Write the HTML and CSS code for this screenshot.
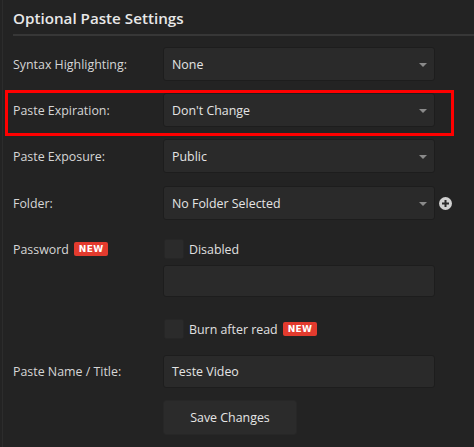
FILE: index.html
```html
<!DOCTYPE html>
<html>
<head>
<meta charset="utf-8">
<link rel="stylesheet" href="styles.css">
</head>
<body>
<div class="panel">
  <h2 class="title">Optional Paste Settings</h2>
  <div class="form">
    <div class="row r-syntax">
      <label class="label">Syntax Highlighting:</label>
      <div class="select"><span>None</span><i class="caret"></i></div>
    </div>
    <div class="row r-exp highlight">
      <label class="label">Paste Expiration:</label>
      <div class="select"><span>Don't Change</span><i class="caret"></i></div>
    </div>
    <div class="row r-exposure">
      <label class="label">Paste Exposure:</label>
      <div class="select"><span>Public</span><i class="caret"></i></div>
    </div>
    <div class="row r-folder">
      <label class="label">Folder:</label>
      <div class="select"><span>No Folder Selected</span><i class="caret"></i></div>
      <svg class="plus" width="13" height="13" viewBox="0 0 13 13"><circle cx="6.5" cy="6.5" r="6.5" fill="#d0d0d0"/><rect x="3" y="5.5" width="7" height="2" fill="#2a2a2a"/><rect x="5.5" y="3" width="2" height="7" fill="#2a2a2a"/></svg>
    </div>
    <div class="row r-pass">
      <label class="label">Password <span class="badge">NEW</span></label>
      <div class="check-wrap"><span class="check"></span><span class="check-text">Disabled</span></div>
    </div>
    <div class="row r-passinput">
      <span class="label"></span>
      <div class="input"></div>
    </div>
    <div class="row r-burn">
      <span class="label"></span>
      <div class="check-wrap"><span class="check"></span><span class="check-text">Burn after read</span><span class="badge">NEW</span></div>
    </div>
    <div class="row r-name">
      <label class="label">Paste Name / Title:</label>
      <div class="input"><span>Teste Video</span></div>
    </div>
    <div class="row r-btn">
      <span class="label"></span>
      <button class="btn">Save Changes</button>
    </div>
  </div>
</div>
</body>
</html>
```
FILE: styles.css
```css
html, body {
  margin: 0;
  padding: 0;
  background: #232323;
  height: 100%;
}
body {
  font-family: "Open Sans", "DejaVu Sans", sans-serif;
  font-size: 12.4px;
  color: #dcdcdc;
}
.panel {
  border-left: 1px solid #2c2c2c;
  margin-left: 2px;
  padding-left: 10px;
  min-height: 447px;
  box-sizing: border-box;
}
.title {
  margin: 0;
  padding-top: 3px;
  font-size: 15.2px;
  font-weight: 600;
  color: #e8e8e8;
  height: 31px;
  line-height: 30px;
  border-bottom: 2px solid #373737;
  box-sizing: content-box;
}
.form {
  display: flex;
  flex-direction: column;
}
.row {
  display: flex;
  align-items: center;
}
.label {
  width: 150px;
  flex: none;
  display: flex;
  align-items: center;
  color: #d6d6d6;
}
.select, .input {
  width: 272px;
  height: 34px;
  box-sizing: border-box;
  background: #2a2a2a;
  border: 1px solid #1d1d1d;
  border-radius: 3px;
  display: flex;
  align-items: center;
  padding: 0 8px;
  color: #e4e4e4;
  position: relative;
}
.caret {
  position: absolute;
  right: 7px;
  top: 15px;
  width: 0;
  height: 0;
  border-left: 4px solid transparent;
  border-right: 4px solid transparent;
  border-top: 4px solid #8a8a8a;
}
.r-syntax { margin-top: 11px; }
.r-exp { margin-top: 9px; }
.highlight {
  margin-left: -8px;
  width: 449px;
  box-sizing: border-box;
  border: 3px solid #ff0000;
  padding: 0 0 6px 5px;
}
.r-exposure { margin-top: 3px; }
.r-folder { margin-top: 13px; }
.plus { margin-left: 4px; }
.r-pass { margin-top: 19px; align-items: center; }
.r-passinput { margin-top: 6px; }
.r-passinput .input { height: 32px; }
.r-burn { margin-top: 22px; }
.r-name { margin-top: 16px; }
.r-name .input { height: 33px; }
.r-btn { margin-top: 12px; }
.check-wrap {
  display: flex;
  align-items: center;
}
.check {
  width: 20px;
  height: 20px;
  margin-left: 1px;
  background: #2b2b2b;
  border-radius: 2px;
  box-sizing: border-box;
  border: 1px solid #262626;
}
.check-text {
  margin-left: 5px;
  color: #e0e0e0;
}
.badge {
  display: inline-block;
  background: #e33b2e;
  color: #fff;
  font-family: "DejaVu Sans", sans-serif;
  font-size: 9px;
  font-weight: bold;
  height: 14px;
  line-height: 14px;
  padding: 0 5px;
  border-radius: 2px;
  margin-left: 5px;
  letter-spacing: 0.3px;
}
.btn {
  width: 134px;
  height: 35px;
  background: #2b2b2b;
  border: 1px solid #272727;
  border-radius: 3px;
  color: #e6e6e6;
  font-family: "Open Sans", "DejaVu Sans", sans-serif;
  font-size: 12.4px;
  padding: 0;
}
```
